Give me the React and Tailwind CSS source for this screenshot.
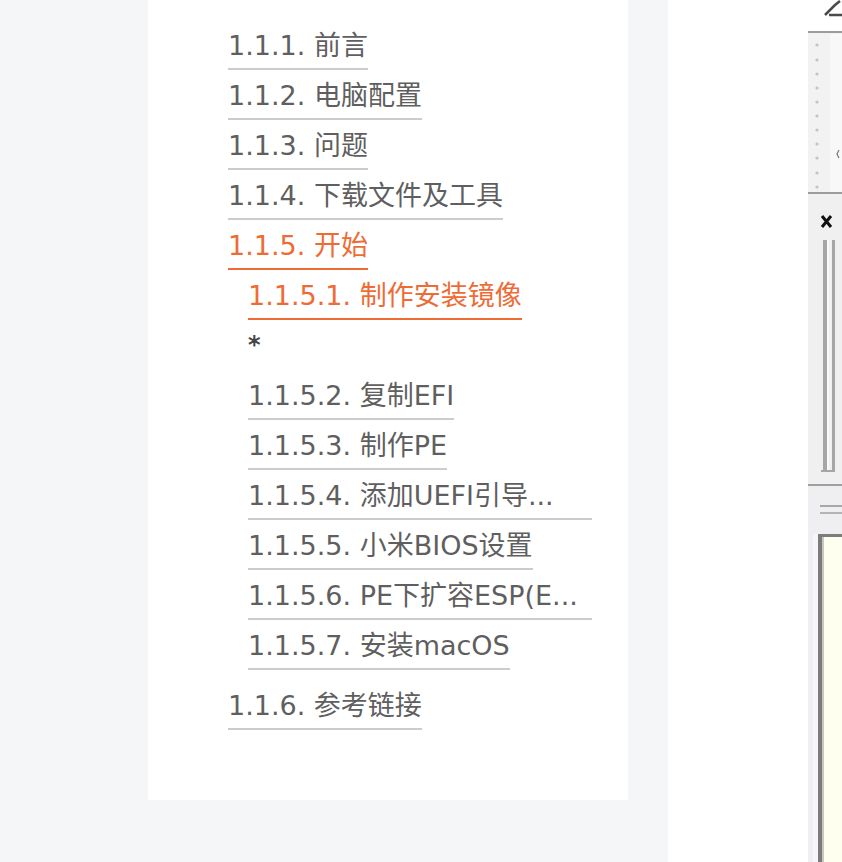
const font = {
  fontFamily: '"DejaVu Sans", "Noto Sans CJK SC", sans-serif',
};

const chapters = [
  { num: '1.1.1.', title: '前言' },
  { num: '1.1.2.', title: '电脑配置' },
  { num: '1.1.3.', title: '问题' },
  { num: '1.1.4.', title: '下载文件及工具' },
  { num: '1.1.5.', title: '开始', active: true },
];

const sections = [
  { num: '1.1.5.2.', title: '复制EFI' },
  { num: '1.1.5.3.', title: '制作PE' },
  { num: '1.1.5.4.', title: '添加UEFI引导...', clip: true },
  { num: '1.1.5.5.', title: '小米BIOS设置' },
  { num: '1.1.5.6.', title: 'PE下扩容ESP(E...', clip: true },
  { num: '1.1.5.7.', title: '安装macOS' },
];

function TocLink({ num, title, active, clip }) {
  return (
    <li className="flex items-start">
      <a
        href="#"
        className={`block whitespace-nowrap overflow-hidden border-b-2 pt-[4px] leading-[44px] ${
          active ? 'text-[#ef6b35] border-[#ef6b35]' : 'text-[#5f5f5f] border-[#cccccc]'
        } ${clip ? 'w-[344px]' : ''}`}
      >
        {num} {title}
      </a>
    </li>
  );
}

function ScreenStrip() {
  const dots = [45, 60, 74, 88, 102, 116, 130, 144, 158, 173, 187];
  return (
    <svg width="34" height="862" viewBox="0 0 34 862" className="shrink-0 block">
      <rect x="0" y="0" width="34" height="862" fill="#ffffff" />
      <path d="M17 15 L27 5 L32 1 M21 15 L34 15" stroke="#4a4a4a" strokeWidth="2.5" fill="none" />
      <rect x="0" y="33" width="34" height="160" fill="#f2f2f2" />
      <rect x="22" y="34" width="12" height="158" fill="#f8f8f8" />
      <rect x="0" y="31" width="34" height="2" fill="#9c9c9c" />
      {dots.map((y) => (
        <circle key={y} cx="9" cy={y} r="1.6" fill="#c4c4c4" />
      ))}
      <path d="M31 150 L29 154 L31 158" stroke="#777" strokeWidth="1.2" fill="none" />
      <rect x="0" y="192" width="34" height="2" fill="#9c9c9c" />
      <rect x="0" y="194" width="34" height="290" fill="#f0f0f0" />
      <path d="M14 216 L23 227 M23 216 L14 227" stroke="#111" strokeWidth="3" />
      <rect x="15" y="240" width="4" height="230" fill="#a6a6a6" />
      <rect x="19" y="240" width="2" height="230" fill="#fafafa" />
      <rect x="24" y="240" width="3" height="232" fill="#a6a6a6" />
      <rect x="13" y="470" width="14" height="2" fill="#a6a6a6" />
      <rect x="0" y="484" width="34" height="2" fill="#a0a0a0" />
      <rect x="0" y="486" width="34" height="376" fill="#efeff2" />
      <rect x="12" y="505" width="22" height="2" fill="#a8a8a8" />
      <rect x="12" y="512" width="22" height="2" fill="#b4b4b4" />
      <rect x="5" y="534" width="29" height="328" fill="#f6f6f8" />
      <rect x="11" y="535" width="23" height="327" fill="#fffff0" />
      <rect x="10" y="534" width="24" height="3" fill="#7c7c7c" />
      <rect x="10" y="534" width="4" height="328" fill="#7c7c7c" />
      <rect x="14" y="537" width="2" height="325" fill="#c8c8c0" />
    </svg>
  );
}

export default function App() {
  return (
    <div className="flex w-[842px] h-[862px] overflow-hidden bg-white" style={font}>
      <div className="w-[668px] shrink-0 bg-[#f5f6f8] pl-[148px]">
        <nav className="w-[480px] h-[800px] bg-white pt-[20px] pl-[80px] text-[27px]">
          <ul>
            {chapters.map((c) => (
              <TocLink key={c.num} {...c} />
            ))}
            <li>
              <ul className="pl-[20px]">
                <TocLink num="1.1.5.1." title="制作安装镜像" active />
                <li className="leading-[50px] text-[24px] text-[#444] font-bold">*</li>
                {sections.map((s) => (
                  <TocLink key={s.num} {...s} />
                ))}
              </ul>
            </li>
            <li className="mt-[10px] flex items-start">
              <a href="#" className="block whitespace-nowrap border-b-2 border-[#cccccc] pt-[4px] leading-[44px] text-[#5f5f5f]">
                1.1.6. 参考链接
              </a>
            </li>
          </ul>
        </nav>
      </div>
      <div className="w-[140px] shrink-0 bg-white" />
      <ScreenStrip />
    </div>
  );
}
